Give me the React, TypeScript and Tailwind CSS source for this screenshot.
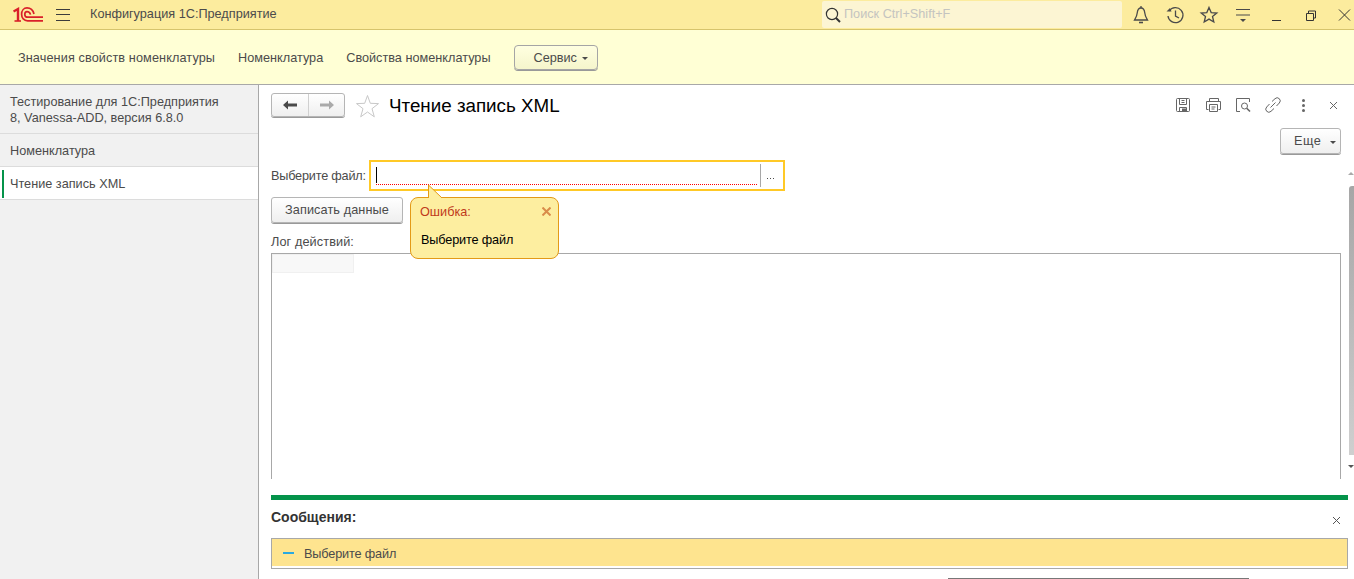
import type { ReactNode } from 'react';

const IconStroke = ({ size = 20, children }: { size?: number; children: ReactNode }) => (
  <svg width={size} height={size} viewBox="0 0 20 20" fill="none" stroke="#4a4a4a" strokeWidth="1.3">
    {children}
  </svg>
);

// логотип 1С
const Logo = () => (
  <svg width="30" height="15" viewBox="0 0 30 15" fill="none" stroke="#d9202a" strokeWidth="2">
    <path d="M0.5 4.5 L5 2 V14" strokeWidth="2.4" />
    <path d="M1.5 14 H8" strokeWidth="1.6" />
    <path d="M21 7 C20 3 17 0.9 14 0.9 C10.8 0.9 8.6 3.6 8.6 7.2 C8.6 11 11 13.8 14.6 13.8 H30" strokeWidth="1.7" />
    <path d="M17.5 7.6 C17 5.6 15.6 4.6 14 4.6 C12.6 4.6 11.8 5.8 11.8 7.4 C11.8 9.2 13 10.2 14.8 10.2 H30" strokeWidth="1.7" />
  </svg>
);

const TopIcon = ({ children }: { children: ReactNode }) => (
  <div className="flex w-[34px] shrink-0 justify-center">{children}</div>
);

const TopBar = () => (
  <div className="flex h-[30px] shrink-0 items-center border-b border-[#d6c46c] bg-[#fcec9e]">
    <div className="ml-[13px] -mt-px flex shrink-0">
      <Logo />
    </div>
    <svg className="ml-[13px] mt-px shrink-0" width="14" height="12" viewBox="0 0 14 12" stroke="#3c3c3c" strokeWidth="1">
      <path d="M0 0.5 H14 M0 5.5 H14 M0 11.5 H14" />
    </svg>
    <span className="ml-[20px] w-[732px] shrink-0 text-[#4b4b4b]">Конфигурация 1С:Предприятие</span>
    <div className="flex h-[27px] w-[300px] shrink-0 items-center rounded-[2px] bg-[#fcf5d3]">
      <svg className="ml-[3px]" width="16" height="16" viewBox="0 0 16 16" fill="none" stroke="#333" strokeWidth="1.2">
        <circle cx="7" cy="7" r="5.6" />
        <path d="M11 11 L15 15" strokeWidth="2" />
      </svg>
      <span className="ml-[3px] text-[#c4c4c0]">Поиск Ctrl+Shift+F</span>
    </div>
    <div className="ml-[2px] flex shrink-0 items-center">
      <TopIcon>
        <IconStroke>
          <path d="M10 3 C7 3 6.5 5 6.2 8 C6 11 5 12.5 3.5 15 H16.5 C15 12.5 14 11 13.8 8 C13.5 5 13 3 10 3 Z" />
          <path d="M8 17.5 H12" strokeWidth="1.6" />
          <path d="M10 1 V3" />
        </IconStroke>
      </TopIcon>
      <TopIcon>
        <IconStroke>
          <path d="M4.2 6 A7.5 7.5 0 1 1 3 11" />
          <path d="M1.5 6.5 H6.5 L5 3 Z" fill="#4a4a4a" stroke="none" />
          <path d="M10.5 5.5 V11 L14 13" />
        </IconStroke>
      </TopIcon>
      <TopIcon>
        <IconStroke>
          <path d="M10 2.5 L12.2 7.6 L17.8 8 L13.5 11.5 L14.8 17 L10 14.1 L5.2 17 L6.5 11.5 L2.2 8 L7.8 7.6 Z" />
        </IconStroke>
      </TopIcon>
      <TopIcon>
        <svg width="14" height="16" viewBox="0 0 14 16" fill="none" stroke="#4a4a4a" strokeWidth="1">
          <path d="M0 2.5 H14 M0 8 H14" />
          <path d="M4 12 H10 L7 15 Z" fill="#4a4a4a" stroke="none" />
        </svg>
      </TopIcon>
      <TopIcon>
        <svg width="16" height="16" viewBox="0 0 16 16" fill="none" stroke="#333" strokeWidth="1">
          <path d="M3 13.5 H12" />
        </svg>
      </TopIcon>
      <TopIcon>
        <svg width="16" height="16" viewBox="0 0 16 16" fill="none" stroke="#333" strokeWidth="1">
          <path d="M3.5 6.5 H10.5 V13.5 H3.5 Z M5.5 6.5 V4 H12.5 V11 H10.5" />
        </svg>
      </TopIcon>
      <TopIcon>
        <svg width="16" height="16" viewBox="0 0 16 16" fill="none" stroke="#333" strokeWidth="1">
          <path d="M2 2.5 L13 13.5 M13 2.5 L2 13.5" />
        </svg>
      </TopIcon>
    </div>
  </div>
);

const SectionBar = () => (
  <div className="flex h-[55px] shrink-0 items-center gap-[23px] border-b border-[#a8a8a8] bg-[#ffffd5] pl-[18px] text-[#4b4b4b]">
    <span className="pt-[3px] tracking-[0.1px]">Значения свойств номенклатуры</span>
    <span className="pt-[3px]">Номенклатура</span>
    <span className="pt-[3px]">Свойства номенклатуры</span>
    <button className="flex h-[25px] w-[84px] items-center gap-[5px] rounded-[4px] border border-[#a5a5a5] bg-gradient-to-b from-[#ffffe0] to-[#f5f5cc] pl-[19px] pt-[3px] shadow-[0_1px_0_#999]">
      Сервис
      <span className="border-x-[3px] border-t-[3px] border-x-transparent border-t-[#4a4a4a]" />
    </button>
  </div>
);

const Sidebar = () => (
  <div className="w-[259px] shrink-0 border-r border-[#a8a8a8] bg-[#f1f1f1] text-[#4b4b4b]">
    <div className="h-[49px] border-b border-[#dcdcdc] px-[10px] pt-[9px] leading-[16px]">
      Тестирование для 1С:Предприятия
      <br />8, Vanessa-ADD, версия 6.8.0
    </div>
    <div className="flex h-[33px] items-center border-b border-[#dcdcdc] px-[10px] pt-[3px]">Номенклатура</div>
    <div className="flex h-[33px] items-center border-b border-[#dcdcdc] bg-white pl-[2px] pt-px">
      <span className="h-[28px] w-[2px] bg-[#04934a]" />
      <span className="ml-[6px] pt-[2px]">Чтение запись XML</span>
    </div>
  </div>
);

const ToolIcon = ({ children }: { children: ReactNode }) => (
  <div className="flex w-[30px] justify-center">{children}</div>
);

const ToolIcons = () => (
  <div className="flex items-center">
    <ToolIcon>
      <svg width="16" height="16" viewBox="0 0 16 16" fill="none" stroke="#666" strokeWidth="1">
        <rect x="1.5" y="1.5" width="13" height="13" rx="1" />
        <path d="M4.5 1.5 V7.5 H11.5 V1.5 M6.5 3.5 H9.5 M6.5 5.5 H9.5" />
        <path d="M4.5 14.5 V10.5 H11.5 V14.5" />
        <rect x="7" y="11.5" width="4" height="3" fill="#666" stroke="none" />
      </svg>
    </ToolIcon>
    <ToolIcon>
      <svg width="17" height="16" viewBox="0 0 17 16" fill="none" stroke="#666" strokeWidth="1">
        <path d="M4.5 4 V1.5 H13.5 V4" />
        <path d="M3.5 12.5 H1.5 V4.5 H15.5 V12.5 H13.5" />
        <path d="M4.5 7.5 H12.5 V14.5 H4.5 Z M6.5 10 H10.5 M6.5 12 H9.5" />
      </svg>
    </ToolIcon>
    <ToolIcon>
      <svg width="16" height="16" viewBox="0 0 16 16" fill="none" stroke="#666" strokeWidth="1">
        <path d="M5 14.5 H1.5 V1.5 H14.5 V5" />
        <circle cx="9.5" cy="9" r="3" />
        <path d="M11.7 11.2 L15 14.5" strokeWidth="1.6" />
      </svg>
    </ToolIcon>
    <ToolIcon>
      <svg width="16" height="16" viewBox="0 0 16 16" fill="none" stroke="#666" strokeWidth="1">
        <path d="M5.5 10.5 L10.5 5.5" />
        <path d="M7 4.5 L10 1.7 A2.8 2.8 0 0 1 14.3 6 L11.5 9" />
        <path d="M9 11.5 L6 14.3 A2.8 2.8 0 0 1 1.7 10 L4.5 7" />
      </svg>
    </ToolIcon>
    <ToolIcon>
      <div className="flex flex-col gap-[2px]">
        <span className="size-[3px] rounded-full bg-[#666]" />
        <span className="size-[3px] rounded-full bg-[#666]" />
        <span className="size-[3px] rounded-full bg-[#666]" />
      </div>
    </ToolIcon>
    <ToolIcon>
      <svg width="9" height="9" viewBox="0 0 9 9" stroke="#666" strokeWidth="1">
        <path d="M1 1 L8 8 M8 1 L1 8" />
      </svg>
    </ToolIcon>
  </div>
);

const Form = () => (
  <div className="relative flex min-w-0 flex-1 flex-col overflow-hidden bg-white pl-[12px]">
    {/* шапка формы */}
    <div className="mt-[9px] flex h-[24px] items-center">
      <div className="-mt-[2px] flex h-[24px] w-[74px] rounded-[3px] border border-[#b5b5b5] bg-gradient-to-b from-white to-[#efefef] shadow-[0_1px_0_#999]">
        <div className="flex w-[37px] items-center justify-center border-r border-[#d0d0d0]">
          <svg width="14" height="10" viewBox="0 0 14 10" fill="#4a4a4a">
            <path d="M0 5 L5 0.5 V3.5 H14 V6.5 H5 V9.5 Z" />
          </svg>
        </div>
        <div className="flex flex-1 items-center justify-center">
          <svg width="14" height="10" viewBox="0 0 14 10" fill="#aaa">
            <path d="M14 5 L9 0.5 V3.5 H0 V6.5 H9 V9.5 Z" />
          </svg>
        </div>
      </div>
      <svg className="ml-[10px]" width="25" height="25" viewBox="0 0 25 25" fill="none" stroke="#c8c8c8" strokeWidth="1">
        <path d="M12.5 1.5 L15.3 9.3 L23.5 9.6 L17 14.7 L19.3 22.8 L12.5 18 L5.7 22.8 L8 14.7 L1.5 9.6 L9.7 9.3 Z" />
      </svg>
      <span className="ml-[9px] text-[18.8px] text-black">Чтение запись XML</span>
      <div className="-mt-[2px] ml-auto mr-[6px]">
        <ToolIcons />
      </div>
    </div>

    <div className="mt-[10px] flex justify-end pr-[13px]">
      <button className="flex h-[26px] w-[61px] items-center justify-between rounded-[3px] border border-[#b5b5b5] bg-gradient-to-b from-white to-[#efefef] pl-[13px] pr-[4px] pt-[2px] tracking-[0.5px] text-[#4b4b4b] shadow-[0_1px_0_#999]">
        Еще
        <span className="border-x-[3px] border-t-[3px] border-x-transparent border-t-[#4a4a4a]" />
      </button>
    </div>

    {/* поле выбора файла */}
    <div className="mt-[6px] flex items-center">
      <span className="w-[98px] pt-[2px] tracking-[-0.2px] text-[#4b4b4b]">Выберите файл:</span>
      <div className="flex h-[31px] w-[416px] items-center border-2 border-[#ffc926] pl-[5px]">
        <div className="mb-[2px] mr-px flex h-[21px] flex-1 items-center bg-[linear-gradient(90deg,#f00_50%,transparent_50%)] bg-[length:2px_1px] bg-bottom bg-repeat-x">
          <span className="h-[16px] w-px bg-black" />
        </div>
        <div className="ml-px flex h-[23px] w-[23px] items-center justify-center gap-[2px] border-l border-[#a8a8a8] pr-[4px] pt-[6px]">
          <span className="size-px bg-[#4b4b4b]" />
          <span className="size-px bg-[#4b4b4b]" />
          <span className="size-px bg-[#4b4b4b]" />
        </div>
      </div>
    </div>

    <button className="mt-[6px] h-[26px] w-[132px] rounded-[3px] border border-[#b5b5b5] bg-gradient-to-b from-white to-[#efefef] pt-[2px] tracking-[0.1px] text-[#4b4b4b] shadow-[0_1px_0_#999]">
      Записать данные
    </button>

    <div className="mt-[10px] h-[20px] tracking-[0.1px] text-[#4b4b4b]">Лог действий:</div>

    <div className="mr-[13px] h-[226px] shrink-0 border-x border-t border-[#a8a8a8]">
      <div className="h-[19px] w-[82px] border border-[#f0f0f0] bg-[#f8f8f8]" />
    </div>

    {/* сообщения */}
    <div className="mt-[16px] mr-[6px] h-[5px] shrink-0 bg-[#04934a]" />
    <div className="mr-[6px] flex h-[38px] shrink-0 items-center justify-between pb-[4px]">
      <span className="text-[14px] font-bold text-[#333]">Сообщения:</span>
      <svg className="mr-[7px] mt-[6px]" width="9" height="9" viewBox="0 0 9 9" stroke="#555" strokeWidth="1">
        <path d="M1 1 L8 8 M8 1 L1 8" />
      </svg>
    </div>
    <div className="mr-[6px] h-[31px] shrink-0 border border-[#a8a8a8]">
      <div className="flex h-[29px] items-center border-b-2 border-white bg-[#fee48f] pl-[11px]">
        <span className="h-[2px] w-[11px] bg-[#2aa9e0]" />
        <span className="ml-[10px] pt-[4px] tracking-[-0.15px] text-[#4b4b4b]">Выберите файл</span>
      </div>
    </div>

    {/* полоса прокрутки формы */}
    <div className="absolute right-0 top-[87px] h-0 w-0 border-x-[3px] border-b-[3px] border-x-transparent border-b-[#aaa]" />
    <div className="absolute right-0 top-[101px] h-[269px] w-[5px] rounded-tl-[3px] bg-gradient-to-b from-[#a6a6a6] to-[#cfcfcf]" />
    <div className="absolute right-0 top-[380px] h-0 w-0 border-x-[3px] border-t-[3px] border-x-transparent border-t-[#555]" />

    {/* подсказка об ошибке */}
    <div className="absolute left-[151px] top-[112px] h-[62px] w-[149px] rounded-[8px] border border-[#e39a17] bg-[#fdeea0] pl-[9px] pr-[7px] pt-[5px]">
      <div className="flex items-center justify-between text-[#c0391b]">
        Ошибка:
        <svg className="-mt-[2px]" width="9" height="9" viewBox="0 0 9 9" stroke="#d98c4a" strokeWidth="2">
          <path d="M0.5 0.5 L8.5 8.5 M8.5 0.5 L0.5 8.5" />
        </svg>
      </div>
      <div className="ml-px mt-[9px] tracking-[-0.15px] text-black">Выберите файл</div>
    </div>
    <svg className="absolute left-[169px] top-[99px]" width="16" height="15" viewBox="0 0 16 15">
      <path d="M0.5 14 V1 L14 14" fill="#fdeea0" stroke="#e39a17" strokeWidth="1" />
    </svg>
    <div className="absolute bottom-0 left-[689px] h-px w-[301px] bg-[#777]" />
  </div>
);

export default function App() {
  return (
    <div className="flex h-[579px] w-[1354px] flex-col overflow-hidden bg-white font-['Liberation_Sans',Arial,sans-serif] text-[12.7px]">
      <TopBar />
      <SectionBar />
      <div className="flex min-h-0 flex-1">
        <Sidebar />
        <Form />
      </div>
    </div>
  );
}
